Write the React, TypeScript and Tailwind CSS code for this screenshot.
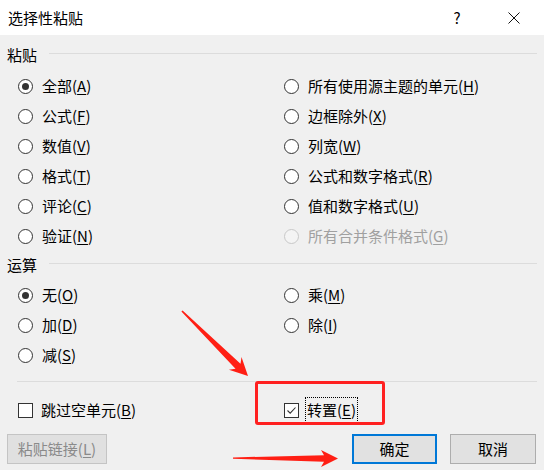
import React from 'react';

type Opt = { label: string; k: string; checked?: boolean; disabled?: boolean };

const pasteOpts: Opt[] = [
  { label: '全部', k: 'A', checked: true },
  { label: '所有使用源主题的单元', k: 'H' },
  { label: '公式', k: 'F' },
  { label: '边框除外', k: 'X' },
  { label: '数值', k: 'V' },
  { label: '列宽', k: 'W' },
  { label: '格式', k: 'T' },
  { label: '公式和数字格式', k: 'R' },
  { label: '评论', k: 'C' },
  { label: '值和数字格式', k: 'U' },
  { label: '验证', k: 'N' },
  { label: '所有合并条件格式', k: 'G', disabled: true },
];

const opOpts: Opt[] = [
  { label: '无', k: 'O', checked: true },
  { label: '乘', k: 'M' },
  { label: '加', k: 'D' },
  { label: '除', k: 'I' },
  { label: '减', k: 'S' },
];

const Mnemonic = ({ label, k }: { label: string; k: string }) => (
  <>
    {label}(<span className="underline underline-offset-2">{k}</span>)
  </>
);

const Radio = ({ label, k, checked, disabled }: Opt) => (
  <div className="flex items-center h-[30px]">
    <span
      className={
        disabled
          ? 'w-[15px] h-[15px] rounded-full border border-[#c8c8c8] bg-[#f4f4f4] flex items-center justify-center'
          : 'w-[15px] h-[15px] rounded-full border border-[#333333] bg-white flex items-center justify-center'
      }
    >
      {checked && <span className="w-[7px] h-[7px] rounded-full bg-[#333333]" />}
    </span>
    <span className={disabled ? 'ml-[9px] text-[15px] leading-[20px] text-[#a0a0a0]' : 'ml-[9px] text-[15px] leading-[20px] text-black'}>
      <Mnemonic label={label} k={k} />
    </span>
  </div>
);

const SectionHeader = ({ title }: { title: string }) => (
  <div className="flex items-center h-[20px] px-[7px]">
    <span className="text-[15px] leading-[20px] text-black">{title}</span>
    <div className="flex-1 h-px bg-[#dcdcdc] ml-[12px] mb-[3px]" />
  </div>
);

const CheckBox = ({ checked }: { checked?: boolean }) => (
  <span className="w-[15px] h-[15px] border border-[#333333] bg-white flex items-center justify-center">
    {checked && (
      <svg width="13" height="13" viewBox="0 0 13 13">
        <polyline points="2.5,6.5 5.2,9.2 10.5,3.5" fill="none" stroke="#333" strokeWidth="1.1" />
      </svg>
    )}
  </span>
);

export default function App() {
  return (
    <div className="relative w-[544px] h-[470px] overflow-hidden bg-[#f0f0f0] font-['Noto_Sans_CJK_SC',sans-serif] text-black">
      {/* 标题栏 */}
      <div className="h-[35px] bg-white flex items-center pl-[8px] pr-[7px]">
        <span className="text-[15px] leading-[20px]">选择性粘贴</span>
        <div className="ml-auto flex items-center">
          <span className="w-[46px] mr-[11px] text-center text-[15px] leading-[20px]">?</span>
          <span className="w-[46px] flex justify-center">
            <svg width="12" height="12" viewBox="0 0 12 12">
              <path d="M0.5 0.5 L11.5 11.5 M11.5 0.5 L0.5 11.5" stroke="#111" strokeWidth="1" />
            </svg>
          </span>
        </div>
      </div>

      {/* 粘贴 */}
      <div className="mt-[10px]">
        <SectionHeader title="粘贴" />
      </div>
      <div className="mt-[6px] grid grid-cols-[266px_1fr] pl-[18px]">
        {pasteOpts.map(o => (
          <Radio key={o.k} {...o} />
        ))}
      </div>

      {/* 运算 */}
      <div className="mt-[4px]">
        <SectionHeader title="运算" />
      </div>
      <div className="mt-[5px] grid grid-cols-[266px_1fr] pl-[18px]">
        {opOpts.map(o => (
          <Radio key={o.k} {...o} />
        ))}
      </div>

      <div className="mt-[11px] ml-[17px] mr-[7px] h-px bg-[#dcdcdc]" />

      <div className="mt-[13px] h-[30px] grid grid-cols-[266px_1fr] pl-[18px] items-center">
        <div className="flex items-center">
          <CheckBox />
          <span className="ml-[8px] text-[15px] leading-[20px]">
            <Mnemonic label="跳过空单元" k="B" />
          </span>
        </div>
        <div className="flex items-center">
          <CheckBox checked />
          <span className="ml-[6px] h-[26px] px-[1px] flex items-center border border-dotted border-black text-[15px] leading-[20px]">
            <Mnemonic label="转置" k="E" />
          </span>
        </div>
      </div>

      {/* 按钮 */}
      <div className="mt-[9px] flex items-center pl-[7px] pr-[8px]">
        <button className="w-[100px] h-[30px] bg-[#e0e0e0] border border-[#c4c4c4] text-[15px] text-[#8a8a8a] leading-[20px]">
          <Mnemonic label="粘贴链接" k="L" />
        </button>
        <button className="ml-auto w-[85px] h-[30px] bg-[#e1e1e1] border-2 border-[#0078d7] text-[15px] leading-[20px]">
          确定
        </button>
        <button className="ml-[13px] w-[86px] h-[30px] bg-[#e1e1e1] border border-[#adadad] text-[15px] leading-[20px]">
          取消
        </button>
      </div>

      {/* 标注 */}
      <div className="absolute left-[255px] top-[381px] w-[130px] h-[44px] border-[3px] border-[#ff2020] rounded-[3px] pointer-events-none" />
      <svg className="absolute left-0 top-0 pointer-events-none" width="544" height="470" viewBox="0 0 544 470">
        <polygon
          fill="#ff1f14"
          points="181.4,311.6 235.5,368.7 228.9,369.8 248,376 241.5,357 240.5,363.7 182.6,310.4"
        />
        <polygon
          fill="#ff1f14"
          points="233,457.4 324,455.2 321,450 338,458.5 321,467 324,461.8 233,458.8"
        />
      </svg>
    </div>
  );
}
